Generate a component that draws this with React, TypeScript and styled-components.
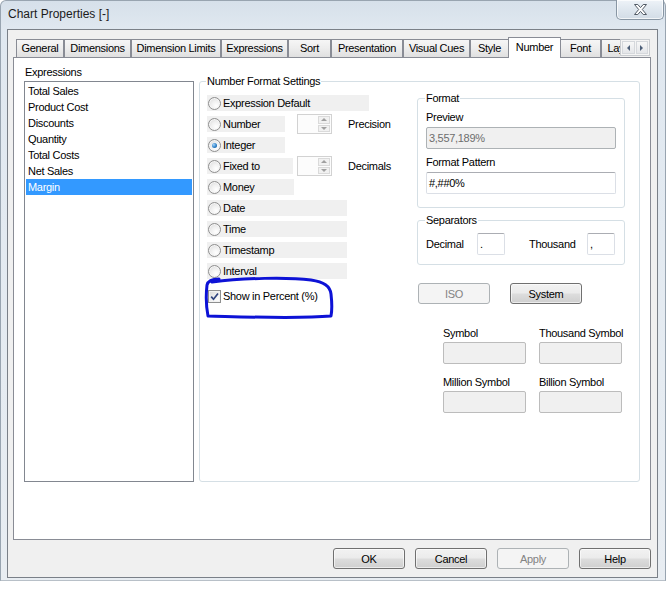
import React from 'react';
import styled, { createGlobalStyle, css } from 'styled-components';

const GlobalStyle = createGlobalStyle`
  html, body { margin: 0; padding: 0; background: #ffffff; }
  body {
    font-family: "Liberation Sans", Arial, sans-serif;
    font-size: 11px;
    letter-spacing: -0.3px;
    color: #000000;
  }
  * { box-sizing: border-box; }
`;

const Window = styled.div`
  width: 666px;
  height: 581px;
  display: flex;
  flex-direction: column;
  padding: 0 7px 2px 6px;
  background: linear-gradient(180deg, #d6e0ea 0px, #e0e8f0 28px, #e8edf2 100%);
  border: 1px solid #98a4b0;
  border-bottom-color: #b8c0c8;
  border-radius: 6px 6px 0 0;
`;

const TitleBar = styled.div`
  height: 28px;
  flex: none;
  display: flex;
  align-items: flex-start;
  justify-content: space-between;
`;

const Title = styled.div`
  margin-top: 6px;
  padding-left: 1px;
  font-size: 12px;
  line-height: 14px;
  letter-spacing: 0;
  color: #1b1b1b;
`;

const CloseButton = styled.div`
  width: 48px;
  height: 20px;
  margin-top: -1px;
  margin-right: -6px;
  display: flex;
  align-items: center;
  justify-content: center;
  border: 1px solid #8896a4;
  border-top: none;
  border-radius: 0 0 5px 5px;
  background: linear-gradient(180deg, #eef3f8 0%, #dfe7ef 50%, #d2dce6 100%);
  box-shadow: inset 0 0 0 1px rgba(255, 255, 255, 0.7);
`;

const Client = styled.div`
  flex: 1;
  display: flex;
  flex-direction: column;
  padding: 7px 6px 8px 5px;
  background: #f0f0f0;
  border: 1px solid #7a8088;
`;

const TabStrip = styled.div`
  height: 21px;
  flex: none;
  display: flex;
  align-items: flex-end;
  padding-left: 3px;
`;

const TabList = styled.div`
  flex: 1;
  height: 21px;
  display: flex;
  align-items: flex-end;
  overflow: hidden;
`;

const Tab = styled.div<{ $width: number; $active?: boolean }>`
  flex: none;
  width: ${p => p.$width}px;
  height: 19px;
  padding-top: 1px;
  line-height: 14px;
  text-align: center;
  white-space: nowrap;
  overflow: hidden;
  border: 1px solid #898c95;
  border-bottom: none;
  background: linear-gradient(180deg, #f6f6f6 0%, #ececec 50%, #dedede 100%);
  ${p => p.$active && css`
    position: relative;
    z-index: 2;
    height: 21px;
    margin: 0 -1px;
    padding-top: 2px;
    background: #ffffff;
  `}
`;

const ScrollArrows = styled.div`
  flex: none;
  align-self: flex-start;
  margin-top: 2px;
  margin-right: 1px;
  width: 30px;
  height: 17px;
  display: flex;
  gap: 1px;
  padding: 1px;
  border: 1px solid #c9ccd0;
  background: #f4f4f4;
`;

const ArrowButton = styled.div<{ $dir: 'left' | 'right' }>`
  flex: 1;
  display: flex;
  align-items: center;
  justify-content: center;
  border: 1px solid #d5d8dc;
  background: linear-gradient(180deg, #f7f7f7, #e4e6e9);
  &::before {
    content: '';
    width: 0;
    height: 0;
    border-top: 3px solid transparent;
    border-bottom: 3px solid transparent;
    ${p => p.$dir === 'left'
      ? css`border-right: 3px solid #4d5f78;`
      : css`border-left: 3px solid #4d5f78;`}
  }
`;

const TabPage = styled.div`
  position: relative;
  z-index: 1;
  margin-top: -1px;
  height: 483px;
  flex: none;
  background: #ffffff;
  border: 1px solid #898c95;
  padding: 7px 10px 0 10px;
`;

const PageGrid = styled.div`
  display: grid;
  grid-template-columns: 170px 441px;
  column-gap: 5px;
  align-items: stretch;
`;

const LeftColumn = styled.div`
  display: flex;
  flex-direction: column;
`;

const FieldCaption = styled.div`
  line-height: 14px;
  height: 14px;
  padding-left: 1px;
  margin-bottom: 2px;
`;

const ListBox = styled.div`
  height: 401px;
  border: 1px solid #828790;
  padding: 1px;
  background: #ffffff;
`;

const ListItem = styled.div<{ $selected?: boolean }>`
  height: 16px;
  line-height: 16px;
  padding-left: 2px;
  white-space: nowrap;
  ${p => p.$selected && css`
    background: #3399ff;
    color: #ffffff;
  `}
`;

const GroupBox = styled.fieldset`
  margin: 0;
  min-width: 0;
  border: 1px solid #d5dfe5;
  border-radius: 3px;
`;

const MainGroup = styled(GroupBox)`
  margin-top: 9px;
  padding: 7px 14px 0 7px;
`;

const Legend = styled.legend`
  padding: 0 1px;
  margin-left: -1px;
  line-height: 14px;
`;

const GroupGrid = styled.div`
  display: grid;
  grid-template-columns: 1fr 208px;
`;

const OptionColumn = styled.div`
  display: flex;
  flex-direction: column;
  gap: 5px;
`;

const OptionRow = styled.div`
  height: 16px;
  display: grid;
  grid-template-columns: 90px 35px auto;
  align-items: center;
`;

const OptionBg = styled.div<{ $width: number }>`
  width: ${p => p.$width}px;
  height: 16px;
  display: flex;
  align-items: center;
  gap: 2px;
  padding-left: 1px;
  background: #f0f0f0;
  white-space: nowrap;
`;

const Radio = styled.span<{ $checked?: boolean }>`
  position: relative;
  flex: none;
  width: 13px;
  height: 13px;
  border-radius: 50%;
  border: 1px solid #8f8f8f;
  background: radial-gradient(circle at 65% 70%, #ffffff 0%, #f0f0f0 45%, #d4d4d4 100%);
  box-shadow: inset 0 0 0 1px #f6f6f6;
  ${p => p.$checked && css`
    &::after {
      content: '';
      position: absolute;
      left: 3px;
      top: 3px;
      width: 5px;
      height: 5px;
      border-radius: 50%;
      background: radial-gradient(circle at 35% 35%, #a8d6fb 0%, #2f82c9 55%, #164a80 100%);
    }
  `}
`;

const SpinBox = styled.div`
  width: 35px;
  height: 20px;
  margin: -2px 0;
  display: flex;
  border: 1px solid #d2d2d2;
  background: #fcfcfc;
`;

const SpinField = styled.div`
  flex: 1;
`;

const SpinButtons = styled.div`
  width: 14px;
  display: flex;
  flex-direction: column;
  gap: 1px;
  padding: 1px;
`;

const SpinButton = styled.div<{ $up?: boolean }>`
  flex: 1;
  display: flex;
  align-items: center;
  justify-content: center;
  border: 1px solid #dadada;
  background: #f1f1f1;
  &::before {
    content: '';
    width: 0;
    height: 0;
    border-left: 3px solid transparent;
    border-right: 3px solid transparent;
    ${p => p.$up
      ? css`border-bottom: 3px solid #a0a0a0;`
      : css`border-top: 3px solid #a0a0a0;`}
  }
`;

const SideLabel = styled.div`
  padding-left: 16px;
  line-height: 14px;
  white-space: nowrap;
`;

const CheckRow = styled.div`
  position: relative;
  margin-top: 4px;
  height: 16px;
  display: flex;
  align-items: center;
  gap: 2px;
  padding-left: 1px;
`;

const CheckBox = styled.span`
  flex: none;
  width: 13px;
  height: 13px;
  display: flex;
  align-items: center;
  justify-content: center;
  border: 1px solid #8e8f8f;
  background: linear-gradient(135deg, #d8d8d8 0%, #f4f4f4 60%, #ffffff 100%);
  box-shadow: inset 0 0 0 1px #f2f2f2;
`;

const Annotation = styled.svg`
  position: absolute;
  left: -4px;
  top: -12px;
  width: 132px;
  height: 46px;
  overflow: visible;
  pointer-events: none;
`;

const RightColumn = styled.div`
  margin-top: -4px;
  display: flex;
  flex-direction: column;
`;

const FormatGroup = styled(GroupBox)`
  padding: 5px 8px 13px 8px;
  display: flex;
  flex-direction: column;
`;

const SeparatorGroup = styled(GroupBox)`
  margin-top: 5px;
  padding: 6px 8px 9px 8px;
`;

const BoxLabel = styled.div<{ $gapTop?: number }>`
  line-height: 14px;
  height: 14px;
  margin-top: ${p => p.$gapTop ?? 0}px;
  margin-bottom: 3px;
  white-space: nowrap;
`;

const TextBox = styled.div<{ $disabled?: boolean }>`
  height: 22px;
  line-height: 20px;
  padding-left: 2px;
  border: 1px solid #dbdfe6;
  border-top-color: #abadb3;
  border-radius: 2px;
  background: #ffffff;
  white-space: nowrap;
  ${p => p.$disabled && css`
    border-color: #adb2b5;
    background: #f0f0f0;
    color: #6d6d6d;
  `}
`;

const SeparatorRow = styled.div`
  display: grid;
  grid-template-columns: 51px 28px 24px 58px 28px;
  align-items: center;
  height: 22px;
`;

const Button = styled.div<{ $disabled?: boolean }>`
  width: 72px;
  height: 21px;
  flex: none;
  display: flex;
  align-items: center;
  justify-content: center;
  border: 1px solid #707070;
  border-radius: 3px;
  background: linear-gradient(180deg, #f2f2f2 0%, #ebebeb 48%, #dddddd 52%, #cfcfcf 100%);
  box-shadow: inset 0 0 0 1px rgba(255, 255, 255, 0.6);
  ${p => p.$disabled && css`
    border-color: #adb2b5;
    background: #f4f4f4;
    box-shadow: none;
    color: #838383;
  `}
`;

const ButtonGroup = styled.div`
  margin-top: 18px;
  padding-left: 1px;
  display: flex;
  gap: 20px;
`;

const SymbolGrid = styled.div`
  margin-top: 22px;
  margin-left: 26px;
  display: grid;
  grid-template-columns: 83px 83px;
  column-gap: 13px;
  row-gap: 11px;
`;

const SymbolCell = styled.div`
  display: flex;
  flex-direction: column;
`;

const SymbolLabel = styled.div`
  line-height: 14px;
  height: 14px;
  margin-bottom: 2px;
  white-space: nowrap;
`;

const SymbolBox = styled.div`
  height: 22px;
  border: 1px solid #bcbcbc;
  border-radius: 2px;
  background: #f0f0f0;
`;

const DialogButtons = styled.div`
  margin-top: 8px;
  display: flex;
  justify-content: flex-end;
  gap: 10px;
`;

const tabs = [
  { label: 'General', w: 48 },
  { label: 'Dimensions', w: 67 },
  { label: 'Dimension Limits', w: 90 },
  { label: 'Expressions', w: 67 },
  { label: 'Sort', w: 43 },
  { label: 'Presentation', w: 72 },
  { label: 'Visual Cues', w: 67 },
  { label: 'Style', w: 39 },
  { label: 'Number', w: 53, active: true },
  { label: 'Font', w: 41 },
  { label: 'Layout', w: 44 },
];

const expressions = ['Total Sales', 'Product Cost', 'Discounts', 'Quantity', 'Total Costs', 'Net Sales', 'Margin'];

type Opt = { label: string; w: number; checked?: boolean; spin?: string };
const options: Opt[] = [
  { label: 'Expression Default', w: 162 },
  { label: 'Number', w: 78, spin: 'Precision' },
  { label: 'Integer', w: 78, checked: true },
  { label: 'Fixed to', w: 86, spin: 'Decimals' },
  { label: 'Money', w: 87 },
  { label: 'Date', w: 140 },
  { label: 'Time', w: 140 },
  { label: 'Timestamp', w: 140 },
  { label: 'Interval', w: 140 },
];

const symbols = ['Symbol', 'Thousand Symbol', 'Million Symbol', 'Billion Symbol'];

export default function App() {
  return (
    <>
      <GlobalStyle />
      <Window>
        <TitleBar>
          <Title>Chart Properties [-]</Title>
          <CloseButton>
            <svg width="15" height="13" viewBox="0 0 15 13">
              <polygon
                points="1.5,1.5 4.8,1.5 7.5,4.6 10.2,1.5 13.5,1.5 9.3,6.5 13.5,11.5 10.2,11.5 7.5,8.4 4.8,11.5 1.5,11.5 5.7,6.5"
                fill="#ffffff"
                stroke="#525b66"
                strokeWidth="1"
                strokeLinejoin="round"
              />
            </svg>
          </CloseButton>
        </TitleBar>
        <Client>
          <TabStrip>
            <TabList>
              {tabs.map(t => (
                <Tab key={t.label} $width={t.w} $active={t.active}>{t.label}</Tab>
              ))}
            </TabList>
            <ScrollArrows>
              <ArrowButton $dir="left" />
              <ArrowButton $dir="right" />
            </ScrollArrows>
          </TabStrip>
          <TabPage>
            <PageGrid>
              <LeftColumn>
                <FieldCaption>Expressions</FieldCaption>
                <ListBox>
                  {expressions.map(e => (
                    <ListItem key={e} $selected={e === 'Margin'}>{e}</ListItem>
                  ))}
                </ListBox>
              </LeftColumn>
              <MainGroup>
                <Legend>Number Format Settings</Legend>
                <GroupGrid>
                  <OptionColumn>
                    {options.map(o => (
                      <OptionRow key={o.label}>
                        <OptionBg $width={o.w}>
                          <Radio $checked={o.checked} />
                          <span>{o.label}</span>
                        </OptionBg>
                        {o.spin && (
                          <>
                            <SpinBox>
                              <SpinField />
                              <SpinButtons>
                                <SpinButton $up />
                                <SpinButton />
                              </SpinButtons>
                            </SpinBox>
                            <SideLabel>{o.spin}</SideLabel>
                          </>
                        )}
                      </OptionRow>
                    ))}
                    <CheckRow>
                      <CheckBox>
                        <svg width="9" height="9" viewBox="0 0 9 9">
                          <path d="M1.2 4.6 L3.5 7.2 L8 1.4" fill="none" stroke="#31457f" strokeWidth="1.7" />
                        </svg>
                      </CheckBox>
                      <span>Show in Percent (%)</span>
                      <Annotation viewBox="0 0 132 46">
                        <path
                          d="M 9 6 C 40 2, 85 1, 108 4 C 121 6, 127 10, 128 18 C 129 27, 129 35, 128 40 C 95 43, 45 41, 5 40 C 3 30, 3 18, 4 9 C 5 5, 9 3, 16 3"
                          fill="none"
                          stroke="#0d12d6"
                          strokeWidth="3"
                          strokeLinecap="round"
                          strokeLinejoin="round"
                        />
                      </Annotation>
                    </CheckRow>
                  </OptionColumn>
                  <RightColumn>
                    <FormatGroup>
                      <Legend>Format</Legend>
                      <BoxLabel>Preview</BoxLabel>
                      <TextBox $disabled>3,557,189%</TextBox>
                      <BoxLabel $gapTop={6}>Format Pattern</BoxLabel>
                      <TextBox>#,##0%</TextBox>
                    </FormatGroup>
                    <SeparatorGroup>
                      <Legend>Separators</Legend>
                      <SeparatorRow>
                        <span>Decimal</span>
                        <TextBox>.</TextBox>
                        <span />
                        <span>Thousand</span>
                        <TextBox>,</TextBox>
                      </SeparatorRow>
                    </SeparatorGroup>
                    <ButtonGroup>
                      <Button $disabled>ISO</Button>
                      <Button>System</Button>
                    </ButtonGroup>
                    <SymbolGrid>
                      {symbols.map(s => (
                        <SymbolCell key={s}>
                          <SymbolLabel>{s}</SymbolLabel>
                          <SymbolBox />
                        </SymbolCell>
                      ))}
                    </SymbolGrid>
                  </RightColumn>
                </GroupGrid>
              </MainGroup>
            </PageGrid>
          </TabPage>
          <DialogButtons>
            <Button>OK</Button>
            <Button>Cancel</Button>
            <Button $disabled>Apply</Button>
            <Button>Help</Button>
          </DialogButtons>
        </Client>
      </Window>
    </>
  );
}
